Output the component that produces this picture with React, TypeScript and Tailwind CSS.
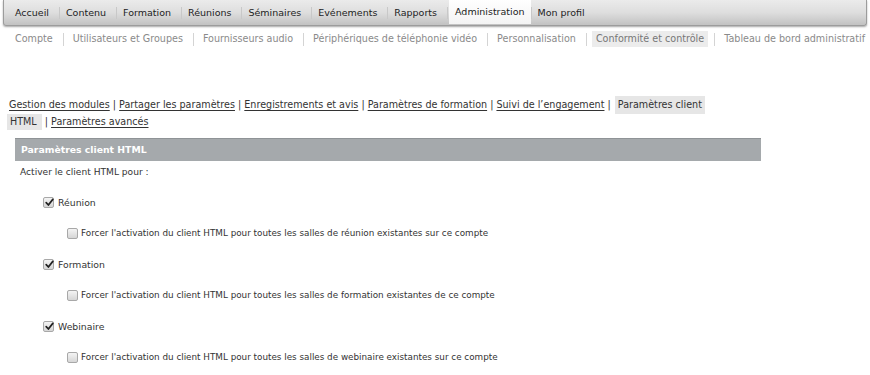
import React from "react";

const font = { fontFamily: '"DejaVu Sans", Verdana, sans-serif' };

function Box({ checked }: { checked: boolean }) {
  return (
    <span className="relative inline-flex h-[11px] w-[11px] shrink-0 items-center justify-center rounded-[2px] border border-[#a8a8a8] bg-gradient-to-b from-[#f4f4f4] to-[#d6d6d6]">
      {checked && (
        <svg width="9" height="9" viewBox="0 0 9 9" className="absolute left-[1px] top-[0px]">
          <path d="M1.2 4.6 L3.4 7 L7.8 1.4" fill="none" stroke="#222" strokeWidth="1.7" strokeLinecap="round" strokeLinejoin="round" />
        </svg>
      )}
    </span>
  );
}

const top = ["Accueil", "Contenu", "Formation", "Réunions", "Séminaires", "Evénements", "Rapports", "Administration", "Mon profil"];
const sub = ["Compte", "Utilisateurs et Groupes", "Fournisseurs audio", "Périphériques de téléphonie vidéo", "Personnalisation", "Conformité et contrôle", "Tableau de bord administratif"];
const tabs = ["Gestion des modules", "Partager les paramètres", "Enregistrements et avis", "Paramètres de formation", "Suivi de l’engagement"];

export default function App() {
  const rows = [
    { label: "Réunion", sub: "Forcer l'activation du client HTML pour toutes les salles de réunion existantes sur ce compte" },
    { label: "Formation", sub: "Forcer l'activation du client HTML pour toutes les salles de formation existantes de ce compte" },
    { label: "Webinaire", sub: "Forcer l'activation du client HTML pour toutes les salles de webinaire existantes sur ce compte" },
  ];
  return (
    <div className="h-[375px] w-[870px] overflow-hidden bg-white text-[#333]" style={font}>
      {/* top nav */}
      <div className="mx-[3px] flex h-[26px] items-stretch rounded-b-[3px] border border-t-0 border-[#9c9c9c] bg-gradient-to-b from-[#ebebeb] via-[#dedede] to-[#c2c2c2] pl-[8px] shadow-[0_1px_2px_rgba(0,0,0,0.35)]">
        {top.map((t, i) => {
          const active = t === "Administration";
          return (
            <div key={t} className="flex items-center">
              {i > 0 && <span className="h-[12px] w-px bg-[#c8c8c8]" />}
              <span
                className={
                  "flex h-full items-center whitespace-nowrap text-[9.5px] leading-none text-[#222] " +
                  (active ? "ml-[1px] bg-gradient-to-b from-white to-[#f4f4f4] px-[6px] mb-[2px] h-[24px]" : i === 0 ? "pl-[3px] pr-[10px]" : "pl-[6px] pr-[10px]")
                }
              >
                {t}
              </span>
            </div>
          );
        })}
      </div>

      {/* sub nav */}
      <div className="mt-[5px] flex h-[16px] items-center whitespace-nowrap pl-[15px] text-[9.6px] leading-none text-[#8a8a8a]">
        {sub.map((t, i) => {
          const active = t === "Conformité et contrôle";
          return (
            <div key={t} className="flex h-full shrink-0 items-center">
              {i > 0 && <span className="ml-[10px] mr-[9px] h-[13px] w-px bg-[#d4d4d4]" />}
              <span className={active ? "-mx-[4px] flex h-full items-center bg-[#ececec] px-[4px] text-[#777]" : ""}>{t}</span>
            </div>
          );
        })}
      </div>

      {/* tabs */}
      <div className="mt-[49px] pl-[9px] text-[9.6px] leading-none text-[#333]">
        <div className="flex h-[18px] items-center whitespace-nowrap">
          {tabs.map((t) => (
            <span key={t} className="whitespace-pre">
              <span className="underline underline-offset-[2px]">{t}</span>
              {" | "}
            </span>
          ))}
          <span className="ml-[1px] flex h-full items-center bg-[#e6e6e6] px-[3px]">Paramètres client</span>
        </div>
        <div className="-ml-[2px] flex h-[16px] items-center">
          <span className="flex h-full items-center bg-[#e6e6e6] px-[3px] pr-[5px]">HTML</span>
          <span className="whitespace-pre">{" | "}</span>
          <span className="underline underline-offset-[2px]">Paramètres avancés</span>
        </div>
      </div>

      {/* header bar */}
      <div className="ml-[15px] mt-[8px] flex h-[23px] w-[746px] items-center border-t border-[#8f9396] bg-[#a5a9ac] pl-[6px] text-[9.3px] font-bold text-white">
        Paramètres client HTML
      </div>

      <div className="ml-[20px] mt-[7px] text-[9.1px] leading-none text-[#333]">Activer le client HTML pour :</div>

      <div className="mt-[10px]">
        {rows.map((r) => (
          <div key={r.label}>
            <div className="flex h-[31px] items-center pl-[43px]">
              <Box checked />
              <span className="ml-[4px] text-[9.3px] leading-none text-[#333]">{r.label}</span>
            </div>
            <div className="flex h-[31px] items-center pl-[67px]">
              <Box checked={false} />
              <span className="ml-[3px] text-[8.8px] leading-none text-[#333]">{r.sub}</span>
            </div>
          </div>
        ))}
      </div>
    </div>
  );
}
